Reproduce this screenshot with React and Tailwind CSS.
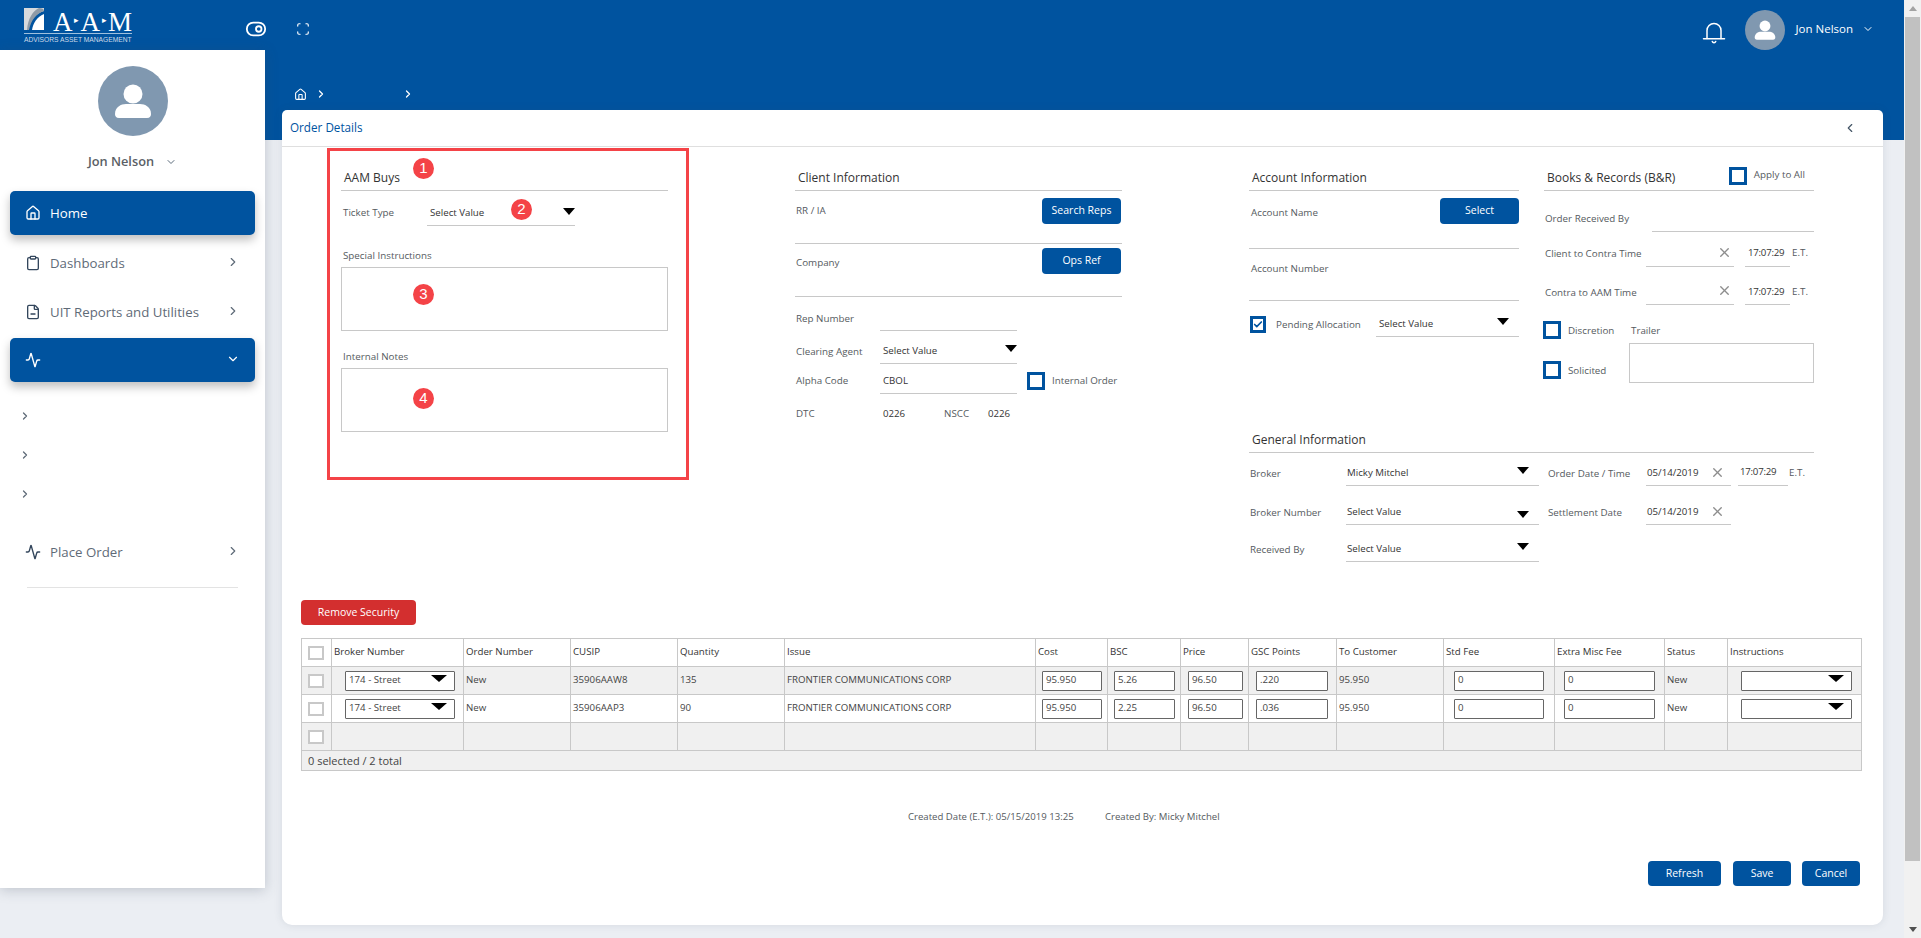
import React from "react";
import { ToggleRight, Scan, ChevronDown, ChevronRight, ChevronLeft, Home, Clipboard, FileMinus, Activity, X, Check } from "lucide-react";

const BLUE = "bg-[#00539f]";

function Avatar({ className }) {
  return (
    <div className={`rounded-full bg-[#8098b0] flex items-center justify-center shrink-0 ${className}`}>
      <svg viewBox="0 0 70 70" className="w-full h-full">
        <circle cx="35" cy="28" r="9.5" fill="#fff" />
        <path d="M17 48c0-7 6-10 11-10h14c5 0 11 3 11 10 0 2-1 4-4 4H21c-3 0-4-2-4-4z" fill="#fff" />
      </svg>
    </div>
  );
}

function Arrow({ className = "" }) {
  return (
    <svg viewBox="0 0 12 7" className={`w-[12px] h-[7px] shrink-0 ${className}`}>
      <path d="M0 0h12L6 7z" fill="#000" />
    </svg>
  );
}

function BellIcon({ className = "" }) {
  return (
    <svg viewBox="0 0 24 24" fill="none" stroke="currentColor" strokeWidth="1.5" strokeLinecap="round" className={className}>
      <path d="M5 18.5V10.5a7 7 0 0 1 14 0v8" />
      <path d="M1.5 18.8h21" />
      <path d="M10.3 21.5a1.8 1.8 0 0 0 3.4 0" />
    </svg>
  );
}

function Logo() {
  return (
    <div className="w-[108px] ml-[24px] mt-[7px] shrink-0">
      <div className="flex items-start h-[25px]">
        <svg viewBox="0 0 21 22" className="w-[21px] h-[22px] mt-[1px] shrink-0">
          <path d="M0 0h20v3C12 5 6 12 4 22H0z" fill="#d6d9dc" />
          <path d="M20 6v16H8C9 15 13 9 20 6z" fill="#fff" />
          <path d="M15 0c3 0 5 1 5 3-7 2-13 9-15 19H3C4 10 9 3 15 0z" fill="#8e9aa6" />
        </svg>
        <div className="ml-[8px] text-white leading-[26px] text-[27px] tracking-[0.5px] whitespace-nowrap font-['Liberation_Serif',serif]">
          A<span className="text-[9px] align-[8px] mx-[1px]">▸</span>A<span className="text-[9px] align-[8px] mx-[1px]">▸</span>M
        </div>
      </div>
      <div className="border-t border-[#9fc0dd] mt-[1px] pt-[1px] text-[#cfdcea] text-[6.7px] leading-[9px] whitespace-nowrap font-['Liberation_Sans',sans-serif]">
        ADVISORS ASSET MANAGEMENT
      </div>
    </div>
  );
}

function NavItem({ icon: I, label, active, chevron = "right", className = "" }) {
  const C = chevron === "down" ? ChevronDown : ChevronRight;
  return (
    <div className={`h-[44px] mx-[10px] rounded-[5px] flex items-center pl-[15px] pr-[15px] text-[13.25px] ${active ? `${BLUE} text-white shadow-[0_5px_10px_rgba(0,0,0,0.25)]` : "text-[#5f6b78]"} ${className}`}>
      <I className={`w-[16px] h-[16px] shrink-0 ${active ? "text-white" : "text-[#33465c]"}`} strokeWidth={2} />
      <span className="ml-[9px] flex-1 whitespace-nowrap pt-[2px]">{label}</span>
      <C className={`w-[14px] h-[14px] -mt-[2px] shrink-0 ${active ? "text-white" : "text-[#5f6b78]"}`} strokeWidth={2} />
    </div>
  );
}

function Sidebar() {
  return (
    <aside className="w-[265px] h-[838px] bg-white shadow-[0_2px_12px_rgba(60,70,90,0.25)] shrink-0 relative z-10">
      <div className="flex justify-center pt-[16px]">
        <Avatar className="w-[70px] h-[70px]" />
      </div>
      <div className="flex items-center justify-center mt-[16px] h-[20px] -mb-[1px] text-[12.8px] font-semibold text-[#5b5f66]">
        Jon Nelson
        <ChevronDown className="w-[12px] h-[12px] ml-[11px] text-[#5b6b7b]" />
      </div>
      <div className="mt-[20px]">
        <NavItem icon={Home} label="Home" active className="[&>svg:last-child]:invisible" />
        <NavItem icon={Clipboard} label="Dashboards" className="mt-[6px]" />
        <NavItem icon={FileMinus} label="UIT Reports and Utilities" className="mt-[5px]" />
        <NavItem icon={Activity} label="" active chevron="down" className="mt-[4px]" />
      </div>
      <div className="pl-[19px] mt-[14px] text-[#5f6b78]">
        <div className="h-[39px] flex items-center"><ChevronRight className="w-[12px] h-[12px]" strokeWidth={2.5} /></div>
        <div className="h-[39px] flex items-center"><ChevronRight className="w-[12px] h-[12px]" strokeWidth={2.5} /></div>
        <div className="h-[39px] flex items-center"><ChevronRight className="w-[12px] h-[12px]" strokeWidth={2.5} /></div>
      </div>
      <NavItem icon={Activity} label="Place Order" className="mt-[17px]" />
      <div className="mx-[27px] mt-[13px] border-t border-[#e3e3e3]" />
    </aside>
  );
}

const label = "text-[9.8px] text-[#555a60] whitespace-nowrap";
const value = "text-[9.7px] text-[#333] whitespace-nowrap";
const clock = "tracking-[-0.25px]";

function SectionTitle({ children, right }) {
  return (
    <div className="h-[31px] border-b border-[#c8c8c8] flex items-center justify-between pl-[3px] pt-[1px] text-[12px] text-[#333]">
      <span className="whitespace-nowrap pt-[5px]">{children}</span>
      {right}
    </div>
  );
}

function Under({ className = "", children }) {
  return <div className={`border-b border-[#c8c8c8] flex items-center shrink-0 ${value} ${className}`}>{children}</div>;
}

function Sel({ className = "", text = "Select Value", arrowClass = "" }) {
  return (
    <Under className={`pl-[3px] pr-[10px] justify-between ${className}`}>
      <span>{text}</span>
      <Arrow className={arrowClass} />
    </Under>
  );
}

function Box({ className = "", checked }) {
  return (
    <div className={`border-[3px] border-[#00539f] bg-white shrink-0 flex items-center justify-center ${className}`}>
      {checked && <Check className="w-[11px] h-[11px] text-[#00539f]" strokeWidth={4} />}
    </div>
  );
}

function Btn({ children, className = "", color = "bg-[#00539f]" }) {
  return (
    <button className={`${color} rounded-[4px] text-white text-[10.5px] flex items-center justify-center whitespace-nowrap shrink-0 ${className}`}>
      {children}
    </button>
  );
}

function Badge({ n, className }) {
  return (
    <div className={`absolute w-[21px] h-[21px] rounded-full bg-[#f44347] text-white text-[15px] flex items-center justify-center font-['Liberation_Sans',sans-serif] ${className}`}>
      {n}
    </div>
  );
}

function ColAAM() {
  return (
    <div className="w-[327px] relative shrink-0">
      <SectionTitle>AAM Buys</SectionTitle>
      <div className="flex items-center mt-[10px] h-[25px]">
        <span className={`${label} w-[86px] pl-[2px]`}>Ticket Type</span>
        <Sel className="w-[148px] h-[25px]" arrowClass="-mt-[4px] -mr-[10px]" />
      </div>
      <div className={`${label} mt-[20px] pl-[2px] pt-[2px] h-[16px] leading-[16px]`}>Special Instructions</div>
      <div className="mt-[5px] h-[64px] border border-[#c8c8c8]" />
      <div className={`${label} mt-[16px] pl-[2px] pt-[2px] h-[16px] leading-[16px]`}>Internal Notes</div>
      <div className="mt-[5px] h-[64px] border border-[#c8c8c8]" />
      <div className="absolute left-[-14px] top-[-12px] w-[362px] h-[332px] border-[3px] border-[#f44347] pointer-events-none" />
      <Badge n="1" className="left-[72px] top-[-2px]" />
      <Badge n="2" className="left-[170px] top-[39px]" />
      <Badge n="3" className="left-[72px] top-[124px]" />
      <Badge n="4" className="left-[72px] top-[228px]" />
    </div>
  );
}

function ColClient() {
  return (
    <div className="w-[327px] ml-[127px] shrink-0">
      <SectionTitle>Client Information</SectionTitle>
      <div className="h-[53px] border-b border-[#c8c8c8] pt-[7px] pr-[1px] flex items-start justify-between">
        <span className={`${label} leading-[26px] pl-[1px]`}>RR / IA</span>
        <Btn className="w-[79px] h-[26px]">Search Reps</Btn>
      </div>
      <div className="h-[53px] border-b border-[#c8c8c8] pt-[4px] pr-[1px] flex items-start justify-between">
        <span className={`${label} leading-[30px] pl-[1px]`}>Company</span>
        <Btn className="w-[79px] h-[26px]">Ops Ref</Btn>
      </div>
      <div className="flex items-center mt-[8px]">
        <span className={`${label} w-[85px] pl-[1px] pt-[2px]`}>Rep Number</span>
        <Under className="w-[137px] h-[26px]" />
      </div>
      <div className="flex items-center mt-[7px]">
        <span className={`${label} w-[85px] pl-[1px] pt-[2px]`}>Clearing Agent</span>
        <Sel className="w-[137px] h-[26px] !pr-[0px] pt-[2px]" arrowClass="-mt-[6px]" />
      </div>
      <div className="flex items-center mt-[5px]">
        <span className={`${label} w-[85px] pl-[1px]`}>Alpha Code</span>
        <Under className="w-[137px] h-[25px] pl-[3px]">CBOL</Under>
        <Box className="w-[18px] h-[18px] ml-[10px] -mt-[2px]" />
        <span className={`${label} ml-[7px]`}>Internal Order</span>
      </div>
      <div className="flex items-center mt-[12px] h-[16px]">
        <span className={`${label} w-[88px] pl-[1px]`}>DTC</span>
        <span className={`${value} w-[61px]`}>0226</span>
        <span className={`${label} w-[44px]`}>NSCC</span>
        <span className={value}>0226</span>
      </div>
    </div>
  );
}

function ColAccount() {
  return (
    <div className="w-[270px] shrink-0">
      <SectionTitle>Account Information</SectionTitle>
      <div className="h-[58px] border-b border-[#c8c8c8] pt-[7px] flex items-start justify-between">
        <span className={`${label} leading-[30px] pl-[2px]`}>Account Name</span>
        <Btn className="w-[79px] h-[26px]">Select</Btn>
      </div>
      <div className="h-[52px] border-b border-[#c8c8c8] pt-[12px]">
        <span className={`${label} block leading-[16px] pl-[2px]`}>Account Number</span>
      </div>
      <div className="flex items-center mt-[10px] h-[26px]">
        <Box className="w-[16px] h-[17px] ml-[1px]" checked />
        <span className={`${label} ml-[10px] w-[100px] pt-[2px]`}>Pending Allocation</span>
        <Sel className="w-[143px] h-[26px] pt-[2px]" arrowClass="-mt-[6px]" />
      </div>
    </div>
  );
}

function XIcon({ className = "" }) {
  return <X className={`w-[15px] h-[15px] text-[#8d8d8d] shrink-0 ${className}`} strokeWidth={2.2} />;
}

function TimeRow({ text, className, nudge = "" }) {
  return (
    <div className={`flex items-center ${className}`}>
      <span className={`${label} w-[102px] pl-[1px] ${nudge}`}>{text}</span>
      <Under className="w-[88px] h-[25px] justify-end pr-[2px]"><XIcon className="-mt-[3px]" /></Under>
      <Under className={`w-[45px] h-[25px] ml-[11px] pl-[3px] ${nudge}`}><span className={`-mt-[2px] ${clock}`}>17:07:29</span></Under>
      <span className={`${label} ml-[2px] -mt-[2px] ${nudge}`}>E.T.</span>
    </div>
  );
}

function ColBooks() {
  return (
    <div className="w-[270px] ml-[25px] shrink-0">
      <SectionTitle right={
        <div className="flex items-center">
          <Box className="w-[18px] h-[18px]" />
          <span className={`${label} ml-[7px] mr-[9px]`}>Apply to All</span>
        </div>
      }>Books &amp; Records (B&amp;R)</SectionTitle>
      <div className="flex items-center mt-[14px]">
        <span className={`${label} w-[108px] pl-[1px] pt-[2px]`}>Order Received By</span>
        <Under className="flex-1 h-[27px]" />
      </div>
      <TimeRow text="Client to Contra Time" className="mt-[10px]" />
      <TimeRow text="Contra to AAM Time" className="mt-[13px]" nudge="pt-[2px]" />
      <div className="flex mt-[16px]">
        <div className="w-[85px] shrink-0">
          <div className="flex items-center">
            <Box className="w-[18px] h-[18px] -ml-[1px]" />
            <span className={`${label} ml-[7px] pt-[2px]`}>Discretion</span>
          </div>
          <div className="flex items-center mt-[22px]">
            <Box className="w-[18px] h-[18px] -ml-[1px]" />
            <span className={`${label} ml-[7px] pt-[2px]`}>Solicited</span>
          </div>
        </div>
        <div className="flex-1">
          <div className={`${label} h-[20px] leading-[20px] pl-[2px]`}>Trailer</div>
          <div className="mt-[2px] h-[40px] border border-[#c8c8c8]" />
        </div>
      </div>
    </div>
  );
}

function GenRow({ name, text, className, arrowClass = "-mt-[6px]", right }) {
  return (
    <div className={`flex items-center ${className}`}>
      <span className={`${label} w-[97px] pl-[1px] pt-[2px]`}>{name}</span>
      <Sel text={text} className="w-[193px] h-[26px] !pl-[1px] pt-[2px]" arrowClass={arrowClass} />
      {right}
    </div>
  );
}

function General() {
  return (
    <div className="mt-[39px]">
      <SectionTitle>General Information</SectionTitle>
      <GenRow name="Broker" text="Micky Mitchel" className="mt-[7px]" right={
        <div className="flex items-center ml-[9px]">
          <span className={`${label} w-[98px] pt-[2px]`}>Order Date / Time</span>
          <Under className="w-[85px] h-[26px] pl-[1px] pr-[6px] justify-between pt-[2px]"><span>05/14/2019</span><XIcon className="-mt-[3px]" /></Under>
          <Under className="w-[50px] h-[25px] ml-[7px] pl-[2px] pt-[1px]"><span className={`-mt-[1px] ${clock}`}>17:07:29</span></Under>
          <span className={`${label} ml-[1px]`}>E.T.</span>
        </div>
      } />
      <GenRow name="Broker Number" text="Select Value" className="mt-[13px]" arrowClass="mt-[3px]" right={
        <div className="flex items-center ml-[9px]">
          <span className={`${label} w-[98px] pt-[2px]`}>Settlement Date</span>
          <Under className="w-[85px] h-[26px] pl-[1px] pr-[6px] justify-between pt-[2px]"><span>05/14/2019</span><XIcon className="-mt-[3px]" /></Under>
        </div>
      } />
      <GenRow name="Received By" text="Select Value" className="mt-[11px]" />
    </div>
  );
}

const th = "border border-[#c8c8c8] px-[2px] text-left font-normal text-[9.7px] text-[#333] whitespace-nowrap";
const td = "border border-[#c8c8c8] px-[2px] text-[9.7px] text-[#444] whitespace-nowrap overflow-hidden";
const inputCls = "h-[20px] border border-[#666] rounded-[1px] bg-white text-[9.7px] text-[#444] pl-[3px] flex items-center";

function GrayBox() {
  return <div className="w-[16px] h-[14px] border-[2px] border-[#c8c8c8] bg-white ml-[4px]" />;
}

function CellSel({ text, className }) {
  return (
    <div className={`${inputCls} justify-between pr-[7px] ${className}`}>
      <span>{text}</span>
      <svg viewBox="0 0 16 7" className="w-[16px] h-[7px] -mt-[5px]"><path d="M0 0h16L8 7z" fill="#000" /></svg>
    </div>
  );
}

function CellIn({ text, className }) {
  return <div className={`${inputCls} ${className}`}>{text}</div>;
}

function Row({ bg, broker, cusip, qty, bsc, gsc }) {
  return (
    <tr className={`h-[28px] ${bg}`}>
      <td className={td}><GrayBox /></td>
      <td className={td}><CellSel text={broker} className="w-[110px] ml-[11px]" /></td>
      <td className={td}>New</td>
      <td className={td}>{cusip}</td>
      <td className={td}>{qty}</td>
      <td className={td}>FRONTIER COMMUNICATIONS CORP</td>
      <td className={td}><CellIn text="95.950" className="w-[60px] ml-[4px]" /></td>
      <td className={td}><CellIn text={bsc} className="w-[61px] ml-[4px]" /></td>
      <td className={td}><CellIn text="96.50" className="w-[55px] ml-[5px]" /></td>
      <td className={td}><CellIn text={gsc} className="w-[72px] ml-[5px]" /></td>
      <td className={td}>95.950</td>
      <td className={td}><CellIn text="0" className="w-[90px] ml-[8px]" /></td>
      <td className={td}><CellIn text="0" className="w-[91px] ml-[7px]" /></td>
      <td className={td}>New</td>
      <td className={td}><CellSel text="" className="w-[111px] ml-[11px]" /></td>
    </tr>
  );
}

function OrderTable() {
  const widths = [30, 132, 107, 107, 107, 251, 72, 73, 68, 88, 107, 111, 110, 63, 134];
  const heads = ["", "Broker Number", "Order Number", "CUSIP", "Quantity", "Issue", "Cost", "BSC", "Price", "GSC Points", "To Customer", "Std Fee", "Extra Misc Fee", "Status", "Instructions"];
  return (
    <table className="table-fixed border-collapse w-[1560px] mt-[13px]">
      <colgroup>{widths.map((w, i) => <col key={i} style={{ width: w }} />)}</colgroup>
      <thead>
        <tr className="h-[28px]">
          {heads.map((h, i) => <th key={i} className={th}>{i === 0 ? <GrayBox /> : h}</th>)}
        </tr>
      </thead>
      <tbody>
        <Row bg="bg-[#f0f0f0]" broker="174 - Street" cusip="35906AAW8" qty="135" bsc="5.26" gsc=".220" />
        <Row bg="bg-white" broker="174 - Street" cusip="35906AAP3" qty="90" bsc="2.25" gsc=".036" />
        <tr className="h-[28px] bg-[#f0f0f0]">
          {heads.map((h, i) => <td key={i} className={td}>{i === 0 && <GrayBox />}</td>)}
        </tr>
        <tr className="h-[20px] bg-[#f0f0f0]">
          <td colSpan={15} className={`${td} pl-[6px] pt-[2px] !text-[11px]`}>0 selected / 2 total</td>
        </tr>
      </tbody>
    </table>
  );
}

function Card() {
  return (
    <div className="w-[1601px] h-[815px] -mt-[30px] ml-[17px] bg-white rounded-t-[5px] rounded-b-[10px] shadow-[0_0_8px_rgba(60,70,90,0.12)] relative">
      <div className="h-[37px] border-b border-[#dfdfdf] flex items-center justify-between pl-[8px] pr-[26px]">
        <span className="text-[11.7px] text-[#00539f]">Order Details</span>
        <ChevronLeft className="w-[14px] h-[14px] text-[#445566]" />
      </div>
      <div className="flex ml-[59px] pt-[13px]">
        <ColAAM />
        <ColClient />
        <div className="w-[565px] ml-[127px] shrink-0">
          <div className="flex">
            <ColAccount />
            <ColBooks />
          </div>
          <General />
        </div>
      </div>
      <div className="ml-[19px] mt-[38px]">
        <Btn color="bg-[#d32f2f]" className="w-[115px] h-[25px]">Remove Security</Btn>
        <OrderTable />
        <div className="flex mt-[38px] ml-[607px] leading-[16px] text-[9.6px] text-[#555a60] whitespace-nowrap">
          <span className="w-[197px]">Created Date (E.T.): 05/15/2019 13:25</span>
          <span>Created By: Micky Mitchel</span>
        </div>
        <div className="flex justify-end w-[1559px] mt-[36px] gap-[11px]">
          <Btn className="w-[73px] h-[25px] mr-[1px]">Refresh</Btn>
          <Btn className="w-[58px] h-[25px]">Save</Btn>
          <Btn className="w-[58px] h-[25px]">Cancel</Btn>
        </div>
      </div>
    </div>
  );
}

function Scrollbar() {
  return (
    <div className="w-[17px] h-[938px] bg-[#f1f1f1] shrink-0 flex flex-col items-center">
      <div className="h-[17px] flex items-center justify-center">
        <div className="w-0 h-0 border-x-[4px] border-x-transparent border-b-[5px] border-b-[#a3a3a3]" />
      </div>
      <div className="w-[15px] h-[844px] bg-[#c1c1c1]" />
      <div className="flex-1" />
      <div className="h-[17px] flex items-center justify-center">
        <div className="w-0 h-0 border-x-[4px] border-x-transparent border-t-[5px] border-t-[#505050]" />
      </div>
    </div>
  );
}

export default function App() {
  return (
    <div className="flex w-[1921px] h-[938px] overflow-hidden bg-[#ebeef3] font-['Open_Sans',sans-serif]">
      <div className="w-[1904px] shrink-0">
        <header className={`h-[50px] ${BLUE} flex items-center text-white`}>
          <div className="w-[245px] self-start shrink-0"><Logo /></div>
          <ToggleRight className="w-[22px] h-[22px] shrink-0 mt-[8px]" strokeWidth={2} />
          <Scan className="w-[14px] h-[14px] ml-[29px] mt-[8px] shrink-0" strokeWidth={2} />
          <div className="flex-1" />
          <BellIcon className="w-[24px] h-[24px] mt-[13px] shrink-0" />
          <Avatar className="w-[40px] h-[40px] ml-[19px] mt-[10px]" />
          <span className="text-[11.5px] ml-[10px] mt-[8px] whitespace-nowrap">Jon Nelson</span>
          <ChevronDown className="w-[12px] h-[12px] ml-[9px] mt-[8px] mr-[30px] shrink-0" />
        </header>
        <div className="flex items-start">
          <Sidebar />
          <div className="flex-1 min-w-0">
            <div className={`h-[90px] ${BLUE} text-white flex items-center pl-[29px] pb-[2px]`}>
              <Home className="w-[13px] h-[13px] shrink-0" strokeWidth={2} />
              <ChevronRight className="w-[12px] h-[12px] ml-[8px] shrink-0" strokeWidth={2.5} />
              <ChevronRight className="w-[12px] h-[12px] ml-[75px] shrink-0" strokeWidth={2.5} />
            </div>
            <Card />
          </div>
        </div>
      </div>
      <Scrollbar />
    </div>
  );
}
